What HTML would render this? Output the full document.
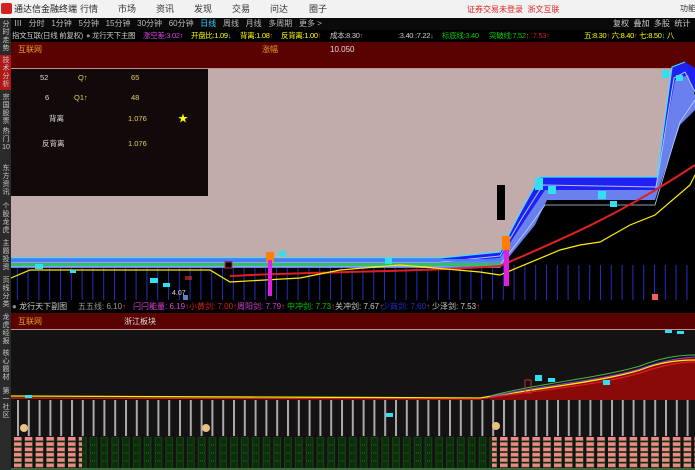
<!DOCTYPE html>
<html><head><meta charset="utf-8"><style>
*{margin:0;padding:0;box-sizing:border-box}
body{width:695px;height:470px;overflow:hidden;background:#141212;font-family:"Liberation Sans","Noto Sans CJK SC",sans-serif;position:relative}
.a{position:absolute;white-space:nowrap;font-size:8px;line-height:10px}
.s{position:absolute;left:1px;width:10px;font-size:7px;line-height:8px;color:#ccc;white-space:normal;text-align:center}
.i{font-size:7.5px;letter-spacing:-0.3px;top:31px}
</style></head><body>
<!-- title bar -->
<div class="a" style="left:0;top:0;width:695px;height:18px;background:#f2f2f2"></div>
<div class="a" style="left:1px;top:3px;width:11px;height:11px;background:#d42020;border-radius:2px"></div>
<div class="a" style="left:14px;top:4px;font-size:9px;color:#222">通达信金融终端</div>
<div class="a" style="left:80px;top:4px;font-size:9px;color:#333">行情</div>
<div class="a" style="left:118px;top:4px;font-size:9px;color:#333">市场</div>
<div class="a" style="left:156px;top:4px;font-size:9px;color:#333">资讯</div>
<div class="a" style="left:194px;top:4px;font-size:9px;color:#333">发现</div>
<div class="a" style="left:232px;top:4px;font-size:9px;color:#333">交易</div>
<div class="a" style="left:270px;top:4px;font-size:9px;color:#333">问达</div>
<div class="a" style="left:309px;top:4px;font-size:9px;color:#333">圈子</div>
<div class="a" style="left:467px;top:5px;color:#e02020">证券交易未登录&nbsp; 浙文互联</div>
<div class="a" style="left:680px;top:4px;color:#333">功能</div>
<!-- sidebar -->
<div class="a" style="left:0;top:18px;width:11px;height:452px;background:#2a2a2a"></div>
<div class="a" style="left:0;top:55px;width:11px;height:35px;background:#b01818"></div>
<div class="s" style="top:21px">分时走势</div>
<div class="s" style="top:57px">技术分析</div>
<div class="s" style="top:94px">宗国股票</div>
<div class="s" style="top:128px">热门10</div>
<div class="s" style="top:165px">东方资讯</div>
<div class="s" style="top:203px">个股龙虎</div>
<div class="s" style="top:240px">主题投资</div>
<div class="s" style="top:277px">页线分类</div>
<div class="s" style="top:314px">龙虎经报</div>
<div class="s" style="top:350px">核心题材</div>
<div class="s" style="top:388px">第一社区</div>
<!-- toolbar -->
<div class="a" style="left:11px;top:18px;width:684px;height:12px;background:#0a0a0a"></div>
<div class="a" style="left:14px;top:19px;color:#bbb">Ⅲ&nbsp;&nbsp; 分时&nbsp;&nbsp; 1分钟&nbsp;&nbsp; 5分钟&nbsp;&nbsp; 15分钟&nbsp;&nbsp; 30分钟&nbsp;&nbsp; 60分钟&nbsp;&nbsp; <span style="color:#3cf">日线</span>&nbsp;&nbsp; 周线&nbsp;&nbsp; 月线&nbsp;&nbsp; 多周期&nbsp;&nbsp; 更多 &gt;</div>
<div class="a" style="left:613px;top:19px;color:#ccc">复权&nbsp; 叠加&nbsp; 多股&nbsp; 统计</div>
<!-- info row -->
<div class="a" style="left:11px;top:30px;width:684px;height:12px;background:#000"></div>
<div class="a i" style="left:12px;color:#ccc">指文互联(日线 前复权)</div>
<div class="a i" style="left:86px;color:#ccc"><span style="color:#888">●</span> 龙行天下主图</div>
<div class="a i" style="left:143px;color:#e040e0">涨空差:3.02↑</div>
<div class="a i" style="left:191px;color:#ff0">开盘比:1.09<span style="color:#3cf">↓</span></div>
<div class="a i" style="left:240px;color:#ff0">背离:1.08<span style="color:#f33">↑</span></div>
<div class="a i" style="left:281px;color:#ff0">反背离:1.00<span style="color:#f33">↑</span></div>
<div class="a i" style="left:330px;color:#ccc">成本:8.30<span style="color:#f33">↑</span></div>
<div class="a i" style="left:398px;color:#ccc">:3.40 :7.22<span style="color:#3cf">↓</span></div>
<div class="a i" style="left:442px;color:#0c0">标底线:3.40</div>
<div class="a i" style="left:489px;color:#0c0">突破线:7.52<span style="color:#f33">↑</span></div>
<div class="a i" style="left:531px;color:#c22">:7.53↑</div>
<div class="a i" style="left:584px;color:#ff0">五:8.30<span style="color:#f33">↑</span> 六:8.40<span style="color:#f33">↑</span> 七:8.50<span style="color:#3cf">↓</span> 八</div>
<!-- upper chart -->
<svg class="a" style="left:11px;top:42px" width="684" height="258" viewBox="11 42 684 258">
<defs>
<pattern id="vb" x="6" y="0" width="10.8" height="300" patternUnits="userSpaceOnUse"><rect x="0" y="0" width="1" height="300" fill="#2030c0"/></pattern>
<clipPath id="cb"><polygon points="11,268 500,268 535,222 547,197 655,197 680,112 695,90 695,300 11,300"/></clipPath>
</defs>
<rect x="11" y="42" width="684" height="258" fill="#000"/>
<rect x="11" y="42" width="684" height="27" fill="#5a0202"/>
<rect x="11" y="68" width="684" height="1" fill="#c09090"/>
<polygon points="11,69 695,69 695,90 680,112 655,197 547,197 535,222 500,268 11,268" fill="#c2abab"/>
<rect x="11" y="265" width="684" height="35" fill="url(#vb)" clip-path="url(#cb)"/>
<polygon points="11,258 440,258 500,252 520,213 540,177 657,177 672,67 685,62 695,68 695,90 680,112 655,197 547,197 535,222 500,268 11,268" fill="#2020f0"/>
<polygon points="11,262 440,262 500,258 525,220 545,190 655,190 675,80 688,75 695,95 695,110 680,125 655,200 547,200 535,225 500,268 11,268" fill="#6a80ee"/>
<polyline points="11,262 440,262 500,256 522,218 543,185 656,187 674,78 685,72 695,92" fill="none" stroke="#aac4ff" stroke-width="1"/>
<polyline points="11,258 440,258 500,252 520,213 540,177 657,177 672,67 685,62" fill="none" stroke="#40e0ff" stroke-width="1.2"/>
<polyline points="11,266 440,266 500,265 530,226 545,205 655,205 680,122 695,100" fill="none" stroke="#c0d0ff" stroke-width="0.8"/>
<rect x="11" y="263" width="490" height="3" fill="#30c060"/>
<rect x="11" y="259" width="490" height="2" fill="#4080ff"/>
<path d="M230,276 C300,272 420,272 500,266 C560,240 620,215 695,165" fill="none" stroke="#e02020" stroke-width="2"/>
<path d="M11,278 L30,270 L210,270 L230,282 L300,278 L340,270 L400,265 L480,272 L500,275 L560,250 L580,245 L600,242 L630,225 L655,215 L690,185 L695,175" fill="none" stroke="#ffee00" stroke-width="1.2"/>
<rect x="35" y="264" width="8" height="5" fill="#30e0f0"/>
<rect x="70" y="270" width="6" height="3" fill="#30e0f0"/>
<rect x="150" y="278" width="8" height="5" fill="#30e0f0"/>
<rect x="163" y="283" width="7" height="4" fill="#30e0f0"/>
<rect x="185" y="276" width="7" height="4" fill="#e03030" fill-opacity=".6"/>
<rect x="183" y="295" width="5" height="5" fill="#6080c0"/>
<rect x="225" y="262" width="7" height="6" fill="#000" stroke="#c03030"/>
<rect x="266" y="252" width="8" height="10" fill="#ff8000"/>
<rect x="279" y="251" width="7" height="5" fill="#30e0f0"/>
<rect x="268" y="260" width="4" height="36" fill="#e020e0"/>
<rect x="385" y="258" width="7" height="6" fill="#30e0f0"/>
<rect x="502" y="236" width="8" height="14" fill="#ff8000"/>
<rect x="504" y="250" width="5" height="36" fill="#e020e0"/>
<rect x="497" y="185" width="8" height="35" fill="#000"/>
<rect x="535" y="178" width="8" height="12" fill="#30e0f0"/>
<rect x="548" y="186" width="8" height="8" fill="#30e0f0"/>
<rect x="598" y="191" width="8" height="8" fill="#30e0f0"/>
<rect x="610" y="201" width="7" height="6" fill="#30e0f0"/>
<rect x="662" y="70" width="7" height="8" fill="#30e0f0"/>
<rect x="676" y="75" width="7" height="6" fill="#30e0f0"/>
<rect x="652" y="294" width="6" height="6" fill="#f06060"/>
<rect x="11" y="69" width="197" height="127" fill="#120a0a"/>
<text x="18" y="52" fill="#f0a020" font-size="8">互联网</text>
<text x="262" y="52" fill="#f0a020" font-size="8">涨幅</text>
<text x="330" y="52" fill="#ddd" font-size="8">10.050</text>
<g font-size="7.5" fill="#e0d060">
<text x="40" y="80" fill="#ddd">52</text><text x="78" y="80">Q↑</text><text x="131" y="80">65</text>
<text x="45" y="100" fill="#ddd">6</text><text x="74" y="100">Q1↑</text><text x="131" y="100">48</text>
<text x="49" y="121" fill="#ddd">背离</text><text x="128" y="121">1.076</text><text x="178" y="122" fill="#ff0" font-size="10">★</text>
<text x="42" y="146" fill="#ddd">反背离</text><text x="128" y="146">1.076</text>
</g>
<text x="172" y="295" fill="#ddd" font-size="7">4.07</text>
</svg>
<!-- lower info row -->
<div class="a" style="left:11px;top:300px;width:684px;height:13px;background:#000"></div>
<div class="a" style="left:12px;top:302px;color:#ccc"><span style="color:#888">●</span> 龙行天下副图</div>
<div class="a" style="left:78px;top:302px;color:#999">五五线: 6.10<span style="color:#f33">↑</span></div>
<div class="a" style="left:133px;top:302px;color:#e040e0">闩闩能量: 6.19<span style="color:#f33">↑</span></div>
<div class="a" style="left:189px;top:302px;color:#e02020">小黄剑: 7.00↑</div>
<div class="a" style="left:237px;top:302px;color:#d040d0">周阳剑: 7.79<span style="color:#f33">↑</span></div>
<div class="a" style="left:287px;top:302px;color:#0c0">中冲剑: 7.73<span style="color:#f33">↑</span></div>
<div class="a" style="left:335px;top:302px;color:#ccc">关冲剑: 7.67<span style="color:#f33">↑</span></div>
<div class="a" style="left:382px;top:302px;color:#2030d0">少商剑: 7.60<span style="color:#f33">↑</span></div>
<div class="a" style="left:432px;top:302px;color:#ccc">少泽剑: 7.53<span style="color:#f33">↑</span></div>
<!-- lower chart -->
<svg class="a" style="left:11px;top:313px" width="684" height="157" viewBox="11 313 684 157">
<defs>
<pattern id="gl" x="17" y="0" width="10.8" height="200" patternUnits="userSpaceOnUse"><rect x="0" y="0" width="2" height="200" fill="#aaa"/></pattern>
<pattern id="pk" x="14" y="437" width="10.8" height="5.3" patternUnits="userSpaceOnUse"><rect x="0" y="0" width="7.5" height="3.6" fill="#f08888"/></pattern>
<pattern id="gr" x="14" y="437" width="10.8" height="8" patternUnits="userSpaceOnUse"><rect x="0.5" y="0.5" width="7" height="7" fill="#0a300a" stroke="#2a8a2a" stroke-width="0.6" stroke-dasharray="1 1"/></pattern>
</defs>
<rect x="11" y="313" width="684" height="157" fill="#141212"/>
<rect x="11" y="313" width="684" height="17" fill="#5a0202"/>
<rect x="11" y="329" width="684" height="1" fill="#c09090"/>
<text x="18" y="324" fill="#f0a020" font-size="8">互联网</text>
<text x="124" y="324" fill="#ddd" font-size="8">浙江板块</text>
<rect x="11" y="400" width="684" height="36" fill="url(#gl)"/>
<path d="M490,398 C540,385 600,380 640,368 C660,362 680,358 695,358 L695,400 L490,400 Z" fill="#8a0a0a"/>
<path d="M11,396 L480,398 C540,388 600,382 640,370 C660,362 680,360 695,360" fill="none" stroke="#ffee00" stroke-width="1.3"/>
<path d="M11,398 L480,399 C540,390 600,385 640,373 C660,366 680,362 695,362" fill="none" stroke="#e02020" stroke-width="1.2"/>
<path d="M490,396 C540,383 600,378 640,366 C660,358 680,355 695,355" fill="none" stroke="#40c040" stroke-width="1"/>
<path d="M490,397 C540,385 600,381 640,369 C660,361 680,358 695,357" fill="none" stroke="#8040e0" stroke-width="1"/>
<rect x="11" y="437" width="684" height="31" fill="url(#gr)"/>
<rect x="14" y="437" width="68" height="31" fill="url(#pk)"/>
<rect x="492" y="437" width="203" height="31" fill="url(#pk)"/>
<rect x="11" y="468" width="684" height="2" fill="#3a6a3a"/>
<circle cx="24" cy="428" r="4" fill="#e8c080"/><circle cx="206" cy="428" r="4" fill="#e8c080"/><circle cx="496" cy="426" r="4" fill="#e8c080"/>
<rect x="25" y="395" width="7" height="3" fill="#30e0f0"/><rect x="386" y="413" width="7" height="4" fill="#30e0f0"/>
<rect x="535" y="375" width="7" height="6" fill="#30e0f0"/><rect x="548" y="378" width="7" height="4" fill="#30e0f0"/>
<rect x="603" y="380" width="7" height="5" fill="#30e0f0"/><rect x="525" y="380" width="6" height="13" fill="none" stroke="#c03030"/>
<rect x="665" y="330" width="7" height="3" fill="#30e0f0"/><rect x="677" y="331" width="7" height="3" fill="#30e0f0"/>
</svg>
</body></html>
